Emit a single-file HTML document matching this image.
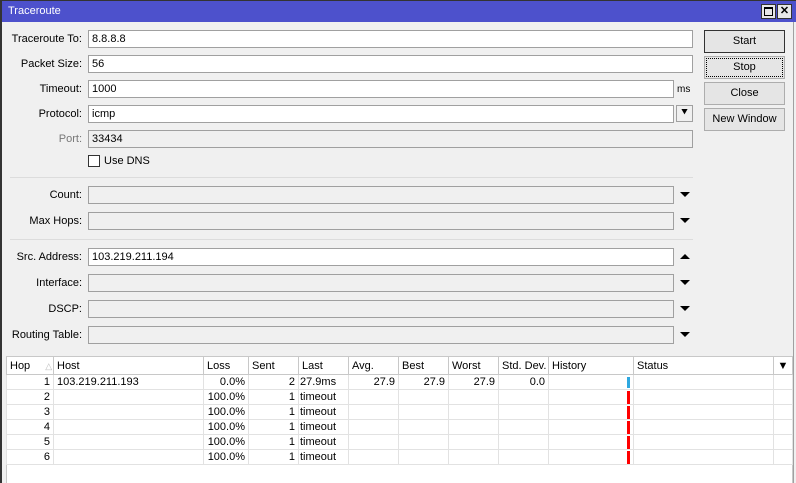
<!DOCTYPE html>
<html><head><style>
*{box-sizing:border-box;margin:0;padding:0}
body{width:796px;height:483px;background:#f0f0f0;font-family:"Liberation Sans",sans-serif;font-size:11px;color:#000;position:relative;overflow:hidden}
.a{position:absolute}
.tb{left:0;top:0;width:796px;height:22px;background:#4d51cc;border-top:1px solid #333;border-left:2px solid #333}
.tb span{position:absolute;left:6px;top:4px;color:#fff;font-size:11px}
.wb{top:4px;width:15px;height:15px;background:#e8e8e8;border:1px solid #333}
.lbl{text-align:right;width:82px;left:0;font-size:11px}
.f{height:18px;border:1px solid #a0a0a0;background:#fff;padding:2px 3px;font-size:11px}
.g{background:#f0f0f0}
.btn{left:704px;width:81px;height:23px;border:1px solid #adadad;background:#e5e5e5;text-align:center;line-height:21px}
.sep{left:10px;width:683px;height:1px;background:#dcdcdc}
.dn{left:680px;width:0;height:0;border-left:5px solid transparent;border-right:5px solid transparent;border-top:5px solid #000}
.up{left:680px;width:0;height:0;border-left:5px solid transparent;border-right:5px solid transparent;border-bottom:5px solid #000}
table{position:absolute;left:6px;top:356px;width:787px;border-collapse:collapse;background:#fff;table-layout:fixed}
td,th{height:15px;border:1px solid #e2e2e2;font-weight:normal;font-size:11px;padding:0 3px;white-space:nowrap;overflow:hidden}
th{height:18px;text-align:left;background:#fff;border-color:#c8c8c8}
.r{text-align:right}
</style></head><body>
<div class="a" style="left:0;top:0;width:2px;height:483px;background:#333"></div>
<div class="a" style="left:6px;top:356px;width:787px;height:127px;background:#fff;border-left:1px solid #c8c8c8;border-right:1px solid #c8c8c8"></div>
<div class="a" style="left:793px;top:22px;width:3px;height:461px;background:#f0f0f0;border-left:1px solid #a0a0a0"></div>
<div class="a tb"><span>Traceroute</span></div>
<div class="a wb" style="left:761px"><div class="a" style="left:2px;top:2px;width:9px;height:9px;border:1px solid #000;border-top-width:2px"></div></div>
<div class="a wb" style="left:777px;font-weight:bold;font-size:11px;line-height:12px;text-align:center">✕</div>

<div class="a lbl" style="top:33px">Traceroute To:</div><div class="a f" style="left:88px;top:30px;width:605px">8.8.8.8</div>
<div class="a lbl" style="top:58px">Packet Size:</div><div class="a f" style="left:88px;top:55px;width:605px">56</div>
<div class="a lbl" style="top:83px">Timeout:</div><div class="a f" style="left:88px;top:80px;width:586px">1000</div>
<div class="a" style="left:677px;top:84px;font-size:10px">ms</div>
<div class="a lbl" style="top:108px">Protocol:</div><div class="a f" style="left:88px;top:105px;width:586px">icmp</div>
<div class="a" style="left:676px;top:105px;width:17px;height:17px;border:1px solid #a0a0a0;background:#f0f0f0;text-align:center;font-size:10px;line-height:14px;font-weight:bold">⯆</div>
<div class="a lbl" style="top:133px;color:#777">Port:</div><div class="a f g" style="left:88px;top:130px;width:605px">33434</div>
<div class="a" style="left:88px;top:155px;width:12px;height:12px;border:1px solid #333;background:#fff"></div>
<div class="a" style="left:104px;top:155px">Use DNS</div>
<div class="a sep" style="top:177px"></div>
<div class="a lbl" style="top:189px">Count:</div><div class="a f g" style="left:88px;top:186px;width:586px"></div><div class="a dn" style="top:192px"></div>
<div class="a lbl" style="top:215px">Max Hops:</div><div class="a f g" style="left:88px;top:212px;width:586px"></div><div class="a dn" style="top:218px"></div>
<div class="a sep" style="top:239px"></div>
<div class="a lbl" style="top:251px">Src. Address:</div><div class="a f" style="left:88px;top:248px;width:586px">103.219.211.194</div><div class="a up" style="top:254px"></div>
<div class="a lbl" style="top:277px">Interface:</div><div class="a f g" style="left:88px;top:274px;width:586px"></div><div class="a dn" style="top:280px"></div>
<div class="a lbl" style="top:303px">DSCP:</div><div class="a f g" style="left:88px;top:300px;width:586px"></div><div class="a dn" style="top:306px"></div>
<div class="a lbl" style="top:329px">Routing Table:</div><div class="a f g" style="left:88px;top:326px;width:586px"></div><div class="a dn" style="top:332px"></div>

<div class="a btn" style="top:30px;border-color:#333">Start</div>
<div class="a btn" style="top:56px;outline:1px dotted #000;outline-offset:-3px">Stop</div>
<div class="a btn" style="top:82px">Close</div>
<div class="a btn" style="top:108px">New Window</div>

<table>
<colgroup><col style="width:47px"><col style="width:150px"><col style="width:45px"><col style="width:50px"><col style="width:50px"><col style="width:50px"><col style="width:50px"><col style="width:50px"><col style="width:50px"><col style="width:85px"><col style="width:140px"><col></colgroup>
<tr><th>Hop <span style="color:#bbb;font-size:9px;margin-left:12px">△</span></th><th>Host</th><th>Loss</th><th>Sent</th><th>Last</th><th>Avg.</th><th>Best</th><th>Worst</th><th>Std. Dev.</th><th>History</th><th>Status</th><th style="text-align:center;font-size:11px">▼</th></tr>
<tr><td class="r">1</td><td>103.219.211.193</td><td class="r">0.0%</td><td class="r">2</td><td style="padding-left:1px">27.9ms</td><td class="r">27.9</td><td class="r">27.9</td><td class="r">27.9</td><td class="r">0.0</td><td style="position:relative"><div class="a" style="right:3px;top:2px;width:3px;height:11px;background:#2ea8e0"></div></td><td></td><td></td></tr>
<tr><td class="r">2</td><td></td><td class="r">100.0%</td><td class="r">1</td><td style="padding-left:1px">timeout</td><td></td><td></td><td></td><td></td><td style="position:relative"><div class="a" style="right:3px;top:1px;width:3px;height:13px;background:#f00"></div></td><td></td><td></td></tr>
<tr><td class="r">3</td><td></td><td class="r">100.0%</td><td class="r">1</td><td style="padding-left:1px">timeout</td><td></td><td></td><td></td><td></td><td style="position:relative"><div class="a" style="right:3px;top:1px;width:3px;height:13px;background:#f00"></div></td><td></td><td></td></tr>
<tr><td class="r">4</td><td></td><td class="r">100.0%</td><td class="r">1</td><td style="padding-left:1px">timeout</td><td></td><td></td><td></td><td></td><td style="position:relative"><div class="a" style="right:3px;top:1px;width:3px;height:13px;background:#f00"></div></td><td></td><td></td></tr>
<tr><td class="r">5</td><td></td><td class="r">100.0%</td><td class="r">1</td><td style="padding-left:1px">timeout</td><td></td><td></td><td></td><td></td><td style="position:relative"><div class="a" style="right:3px;top:1px;width:3px;height:13px;background:#f00"></div></td><td></td><td></td></tr>
<tr><td class="r">6</td><td></td><td class="r">100.0%</td><td class="r">1</td><td style="padding-left:1px">timeout</td><td></td><td></td><td></td><td></td><td style="position:relative"><div class="a" style="right:3px;top:1px;width:3px;height:13px;background:#f00"></div></td><td></td><td></td></tr>
</table>
</body></html>
